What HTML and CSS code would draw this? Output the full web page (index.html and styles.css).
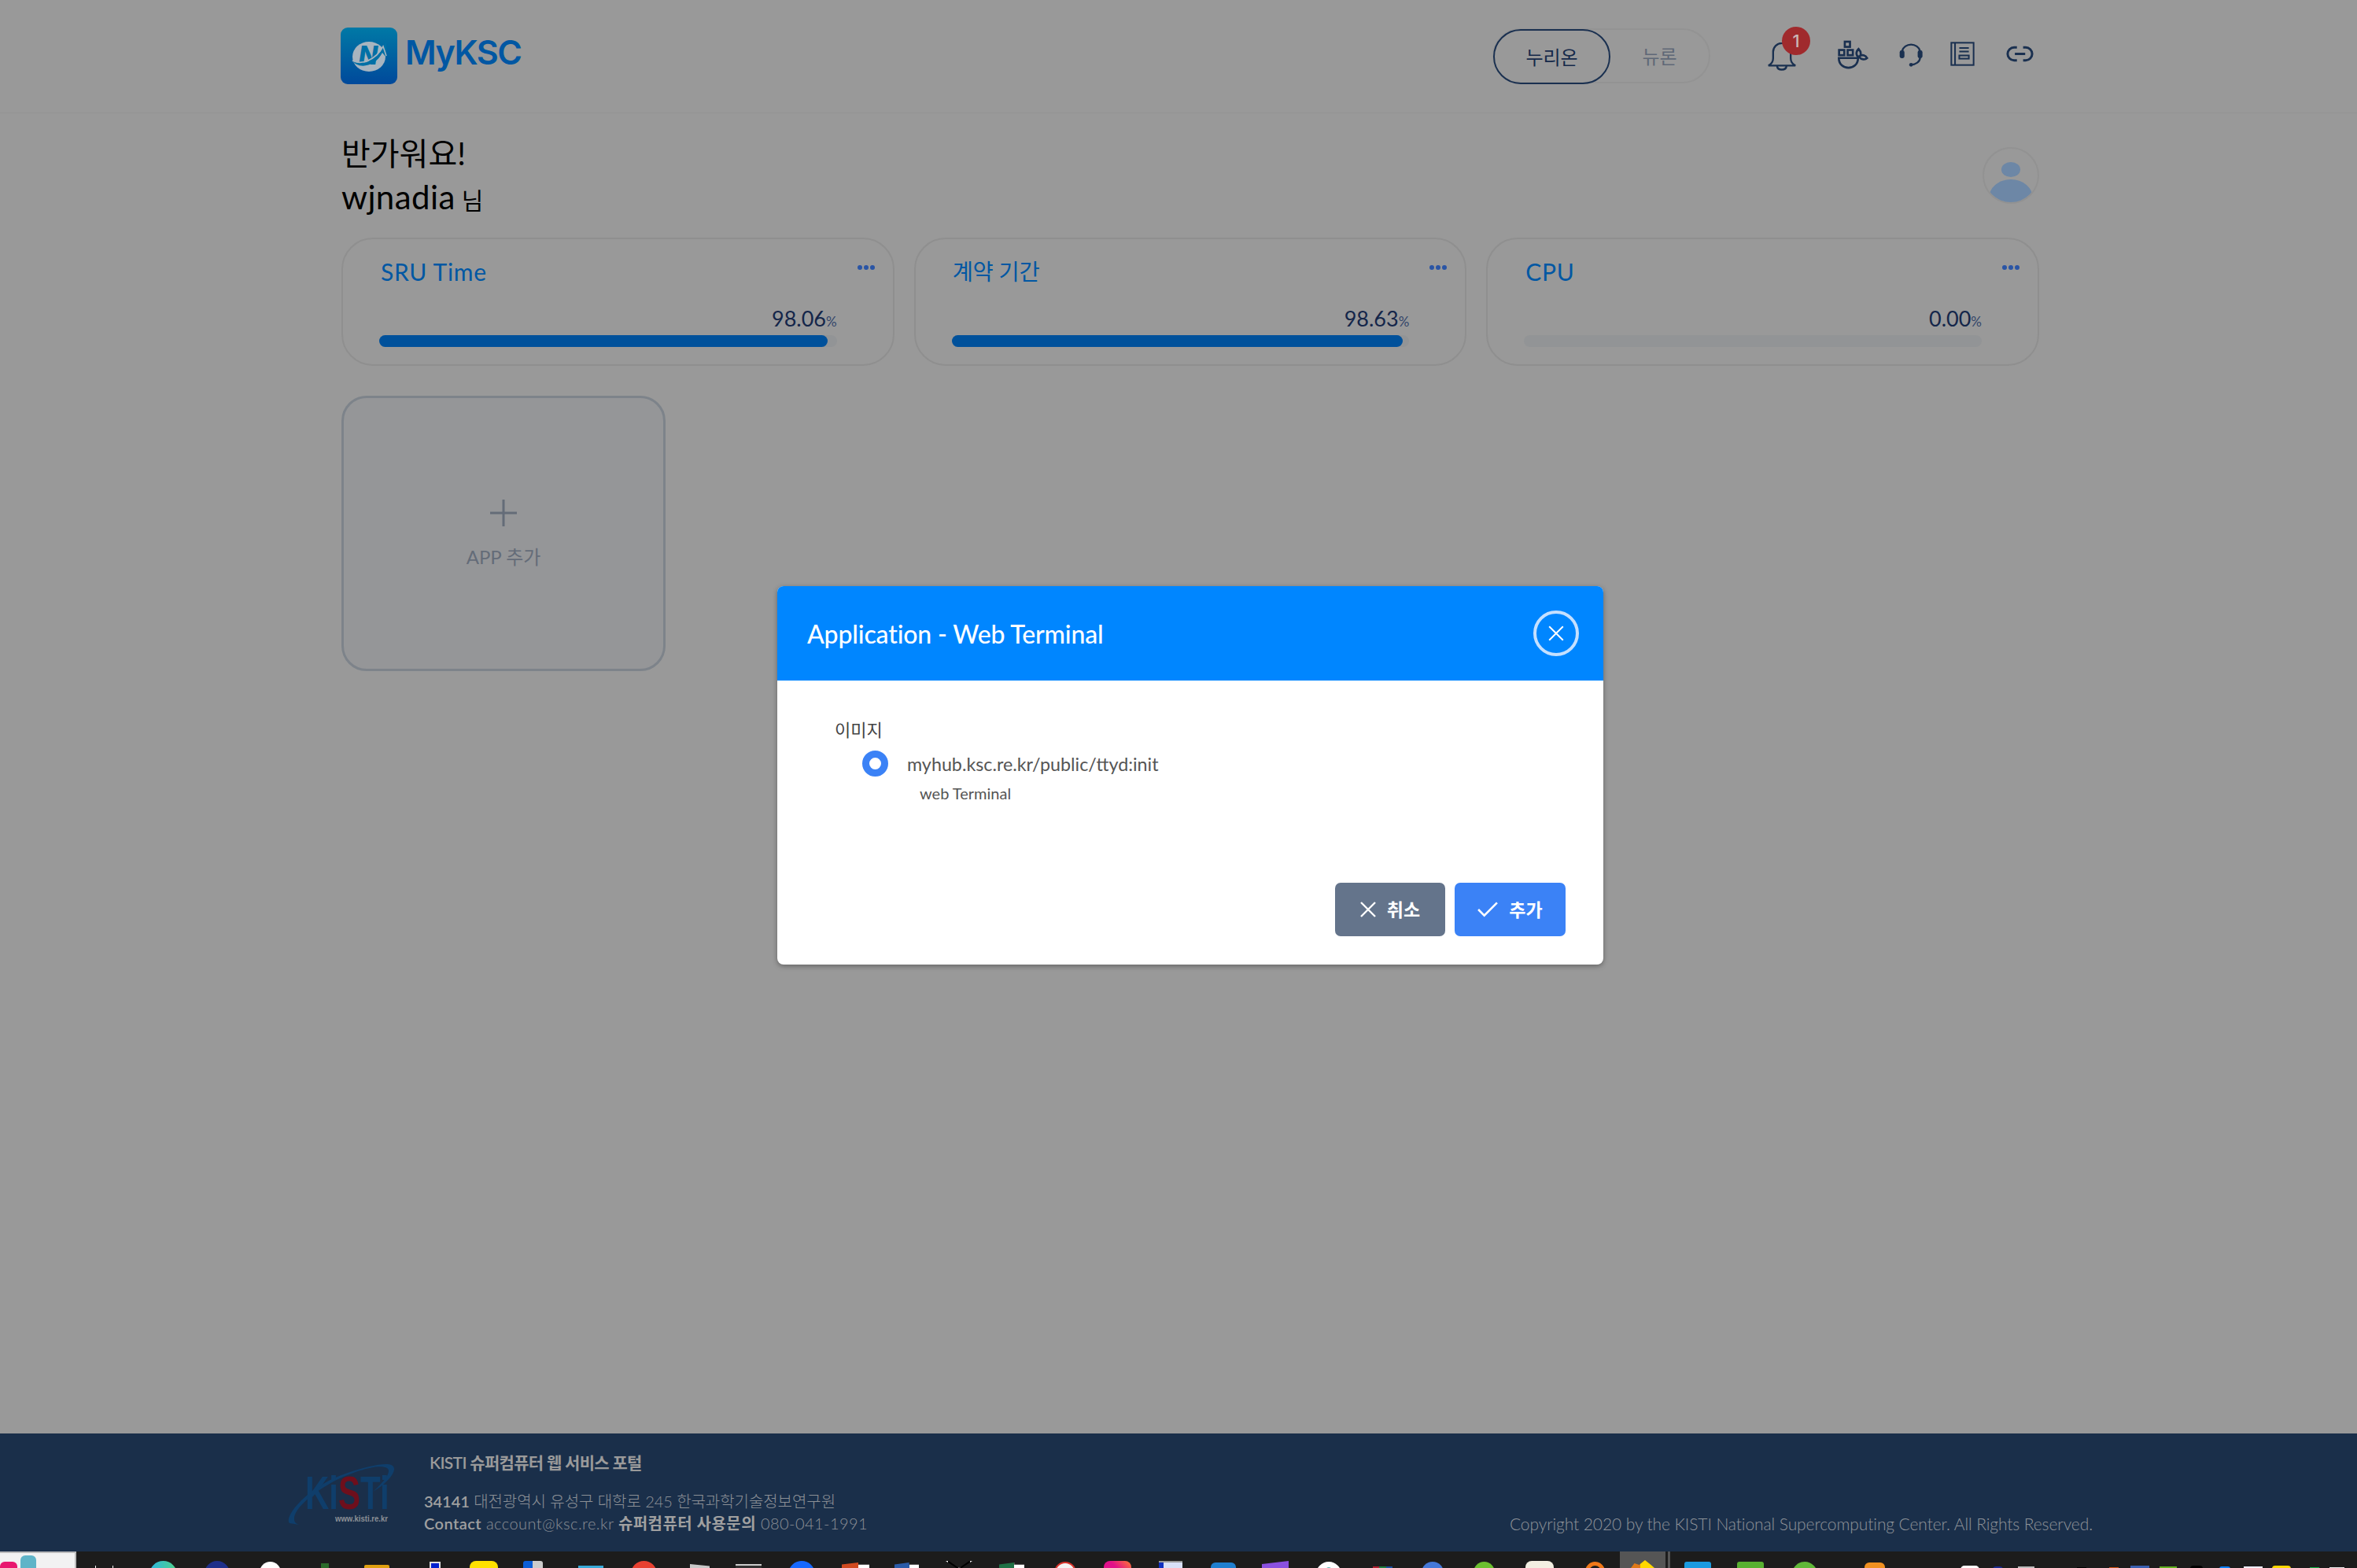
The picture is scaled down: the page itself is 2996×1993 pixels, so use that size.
FILE: index.html
```html
<!DOCTYPE html>
<html lang="ko">
<head>
<meta charset="utf-8">
<title>MyKSC</title>
<link rel="stylesheet" href="styles.css">
</head>
<body>
<div class="page">
  <header class="topbar">
    <div class="brand">
      <svg class="brand-mark" viewBox="0 0 72 72">
        <defs><linearGradient id="lg" x1="0" y1="0" x2="0" y2="1"><stop offset="0" stop-color="#0079a6"/><stop offset="1" stop-color="#00499b"/></linearGradient></defs>
        <rect width="72" height="72" rx="9" fill="url(#lg)"/>
        <ellipse cx="36" cy="37" rx="21" ry="19" fill="#a7b4bf"/>
        <text x="35" y="47" class="brand-n" text-anchor="middle">N</text>
        <path d="M14 41C24 50 44 44 53 26L58 18L58 38L53 32C44 50 22 54 14 41Z" fill="#0070a6"/>
        <path d="M15 42C26 48 44 42 54 24L58 36" fill="none" stroke="#a7b4bf" stroke-width="1.6"/>
      </svg>
      <span class="brand-name">MyKSC</span>
    </div>
    <div class="toggle">
      <button class="toggle-on">누리온</button>
      <button class="toggle-off">뉴론</button>
    </div>
    <nav class="tools">
      <span class="bell-wrap">
        <svg class="ic ic-bell" viewBox="77 97 113 108"><path d="M82 185c12-6 18-14 18-28v-24a33 33 0 0 1 67 0v24c0 14 6 22 18 28zM115 187c2 18 34 18 36 0" fill="none"/></svg>
        <span class="badge">1</span>
      </span>
      <svg class="ic ic-docker" viewBox="340 85 125 115"><rect x="372" y="94" width="20" height="20"/><rect x="350" y="126" width="20" height="20"/><rect x="383" y="126" width="20" height="20"/><path d="M349 157h74c0 50-74 50-74 0zM425 122c-14 14-8 28 2 32 8-6 10-20-2-32zM428 150c10-8 24-4 30 7-8 8-22 6-30-3z"/></svg>
      <svg class="ic ic-head" viewBox="580 95 95 95"><path d="M594 130a35 32 0 0 1 68 0M662 155c0 16-16 26-34 27"/><rect class="solid" x="585" y="128" width="18" height="29" rx="7"/><rect class="solid" x="653" y="128" width="18" height="29" rx="7"/><circle class="solid" cx="628" cy="182" r="7"/></svg>
      <svg class="ic ic-book" viewBox="778 98 92 92"><rect x="782" y="102" width="84" height="84"/><path d="M796 102v84M812 122h36M812 135h36"/><rect x="812" y="150" width="36" height="12"/></svg>
      <svg class="ic ic-link" viewBox="995 113 105 64"><path d="M1036 120h-11a25 25 0 0 0 0 50h11M1060 120h10a25 25 0 0 1 0 50h-10M1028 145h40"/></svg>
    </nav>
  </header>

  <main class="content">
    <section class="greeting">
      <div class="hello">
        <p class="hello-1">반가워요!</p>
        <p class="hello-2">wjnadia <small>님</small></p>
      </div>
      <div class="avatar">
        <span class="avatar-head"></span>
        <span class="avatar-body"></span>
      </div>
    </section>

    <section class="cards">
      <article class="card">
        <div class="card-head"><h3>SRU Time</h3><span class="dots"><i></i><i></i><i></i></span></div>
        <div class="pct">98.06<small>%</small></div>
        <div class="track"><div class="fill" style="width:98.06%"></div></div>
      </article>
      <article class="card">
        <div class="card-head"><h3 class="ko">계약 기간</h3><span class="dots"><i></i><i></i><i></i></span></div>
        <div class="pct">98.63<small>%</small></div>
        <div class="track"><div class="fill" style="width:98.63%"></div></div>
      </article>
      <article class="card">
        <div class="card-head"><h3>CPU</h3><span class="dots"><i></i><i></i><i></i></span></div>
        <div class="pct">0.00<small>%</small></div>
        <div class="track"><div class="fill" style="width:0%"></div></div>
      </article>
    </section>

    <button class="add-app">
      <svg class="add-plus" viewBox="0 0 36 36"><path d="M18 1v34M1 18h34"/></svg>
      <span>APP 추가</span>
    </button>
  </main>
</div>

<footer class="footer">
  <svg class="kisti" viewBox="0 0 140 84">
    <path d="M2 78C-6 70 26 30 76 14C110 3 136 -2 135 10C134 18 122 30 108 38C124 24 132 12 126 8C116 2 84 12 60 24C30 40 8 60 8 72C8 76 9 78 14 80Z" fill="#0f3e6b"/>
    <text transform="translate(22 60) scale(.7 1)" class="kisti-name">Ki<tspan class="kisti-s">S</tspan>Ti</text>
    <text x="60" y="76" class="kisti-url" textLength="67" lengthAdjust="spacingAndGlyphs">www.kisti.re.kr</text>
  </svg>
  <div class="foot-info">
    <p class="foot-title">KISTI 슈퍼컴퓨터 웹 서비스 포털</p>
    <p class="foot-line"><b>34141</b> 대전광역시 유성구 대학로 245 한국과학기술정보연구원</p>
    <p class="foot-line foot-contact"><b>Contact</b> account@ksc.re.kr <b>슈퍼컴퓨터 사용문의</b> 080-041-1991</p>
  </div>
  <p class="copyright">Copyright 2020 by the KISTI National Supercomputing Center. All Rights Reserved.</p>
</footer>

<div class="taskbar">
  <span class="t-start"><i class="t-pink"></i><i class="t-puzzle"></i></span>
  <i class="t t1"></i><i class="t t2"></i><i class="t t3"></i><i class="t t4"></i><i class="t t5"></i><i class="t t6"></i>
  <i class="t t7"></i><i class="t t8"></i><i class="t t9"></i><i class="t t10"></i><i class="t t11"></i><i class="t t12"></i>
  <i class="t t13"></i><i class="t t14"></i><i class="t t15"></i><i class="t t16"></i><i class="t t17"></i><i class="t t18"></i>
  <i class="t t19"></i><i class="t t20"></i><i class="t t21"></i><i class="t t22"></i><i class="t t23"></i><i class="t t24"></i>
  <i class="t t25"></i><i class="t t26"></i><i class="t t27"></i><i class="t t28"></i><i class="t t29"></i>
  <span class="t t30"><i class="t-flame"></i></span><i class="t t31"></i>
  <i class="t t32"></i><i class="t t33"></i><i class="t t34"></i><i class="t t35"></i>
  <i class="t t36"></i><i class="t t37"></i><i class="t t38"></i><i class="t t39"></i><i class="t t40"></i><i class="t t41"></i><i class="t t42"></i>
  <i class="t t43"></i><i class="t t44"></i><i class="t t45"></i><i class="t t46"></i><i class="t t47"></i><i class="t t48"></i>
</div>

<div class="modal" role="dialog">
  <div class="modal-head">
    <h2>Application - Web Terminal</h2>
    <button class="modal-close">
      <svg viewBox="0 0 20 20"><path d="M2 2l16 16M18 2L2 18"/></svg>
    </button>
  </div>
  <div class="modal-body">
    <label class="field-label">이미지</label>
    <div class="option">
      <span class="radio"></span>
      <span class="option-name">myhub.ksc.re.kr/public/ttyd:init</span>
    </div>
    <p class="option-desc">web Terminal</p>
  </div>
  <div class="modal-foot">
    <button class="btn btn-cancel"><svg viewBox="0 0 20 20"><path d="M1 1l18 18M19 1L1 19"/></svg><span>취소</span></button>
    <button class="btn btn-ok"><svg class="chk" viewBox="0 0 24 18"><path d="M1 9l7 7L23 1"/></svg><span>추가</span></button>
  </div>
</div>
</body>
</html>
```
FILE: styles.css
```css
* { box-sizing: border-box; }
html, body { height: 100%; }
body {
  margin: 0;
  width: 2996px;
  height: 1993px;
  overflow: hidden;
  display: flex;
  flex-direction: column;
  position: relative;
  background: #999;
  font-family: "Lato", "Noto Sans CJK KR", sans-serif;
  color: #14264a;
}
p, h2, h3 { margin: 0; font-weight: 400; }
button { font: inherit; border: 0; background: none; padding: 0; }

.page { flex: 1; min-height: 0; }

.topbar {
  height: 144px;
  padding: 0 411px 0 433px;
  display: flex;
  align-items: center;
  border-bottom: 1px solid #949494;
}
.brand { display: flex; align-items: center; gap: 10px; margin-top: -1px; }
.brand-mark { width: 72px; height: 72px; }
.brand-n { font: italic 800 32px "Inter", sans-serif; fill: #0070a6; }
.brand-name {
  font: 600 43px "Inter", sans-serif;
  letter-spacing: -1.5px;
  color: #0057a3;
  margin-top: -10px;
}

.toggle {
  margin: -2px 0 0 auto;
  width: 277px;
  height: 70px;
  display: flex;
  border: 2px solid #939393;
  border-radius: 35px;
}
.toggle-on {
  width: 149px;
  height: 70px;
  margin: -1px 0 0 -1px;
  border: 2px solid #1a3050;
  border-radius: 35px;
  font-size: 24px;
  color: #15294a;
}
.toggle-off { flex: 1; font-size: 24px; color: #5f6877; }

.tools { display: flex; align-items: center; margin: -6px 0 0 72px; }
.ic { display: block; fill: none; stroke: #1a3050; stroke-width: 8; }
.ic .solid { fill: #1a3050; stroke: none; }
.bell-wrap { position: relative; display: block; }
.ic-bell { width: 38px; height: 36px; stroke-width: 7; margin-top: 7px; }
.badge {
  position: absolute;
  left: 19px;
  top: -13px;
  width: 36px;
  height: 36px;
  border-radius: 50%;
  background: #a02a2d;
  color: #c9b6b6;
  font: 500 22px/36px "Inter", sans-serif;
  text-align: center;
}
.ic-docker { width: 42px; height: 38px; margin-left: 50px; }
.ic-head { width: 32px; height: 32px; margin-left: 37px; stroke-width: 7; }
.ic-book { width: 31px; height: 31px; margin-left: 34px; stroke-width: 6; }
.ic-link { width: 35px; height: 21px; margin-left: 40px; stroke-width: 9; }

.content { margin-left: 434px; width: 2158px; }

.greeting { height: 158px; display: flex; justify-content: space-between; }
.hello { padding-top: 23px; color: #000; }
.hello-1 { font-size: 40px; line-height: 56px; }
.hello-2 { font-size: 42px; line-height: 56px; letter-spacing: .4px; margin-top: -1px; }
.hello-2 small { font-size: 30px; margin-left: -3px; }
.avatar {
  margin-top: 43px;
  width: 72px;
  height: 72px;
  border-radius: 50%;
  border: 2px solid #929292;
  overflow: hidden;
  display: flex;
  flex-direction: column;
  align-items: center;
}
.avatar-head { width: 24px; height: 24px; margin-top: 17px; border-radius: 50%; background: #6d87a6; }
.avatar-body { width: 56px; height: 36px; margin-top: 3px; border-radius: 28px 28px 0 0 / 24px 24px 0 0; background: #6d87a6; }

.cards { display: grid; grid-template-columns: repeat(3, 1fr); gap: 25px; }
.card {
  height: 163px;
  padding: 0 23px 0 46px;
  border: 2px solid #8f8f8f;
  border-radius: 40px;
}
.card-head { height: 86px; display: flex; justify-content: space-between; }
.card-head h3 { font-size: 30px; letter-spacing: .7px; line-height: 44px; margin: 19px 0 0 2px; color: #0057a3; }
.card-head h3.ko { font-size: 28.5px; letter-spacing: -.3px; margin: 19px 0 0 1px; }
.dots { display: flex; gap: 2px; margin-top: 33px; height: 6px; }
.dots i { width: 6px; height: 6px; border-radius: 50%; background: #2a55a5; }
.pct {
  margin-right: 48px;
  height: 32px;
  margin-top: -1px;
  text-align: right;
  font-size: 27px;
  line-height: 32px;
}
.pct small { font-size: 17px; color: #33466a; }
.track {
  margin: 5px 48px 0 0;
  height: 15px;
  border-radius: 8px;
  background: #929496;
}
.fill { height: 100%; border-radius: 8px; background: #00519b; }

.add-app {
  display: flex;
  flex-direction: column;
  align-items: center;
  margin-top: 38px;
  width: 412px;
  height: 350px;
  padding-top: 128px;
  border: 3px solid #7d838a;
  border-radius: 32px;
  background: #959698;
  color: #646c78;
  font-size: 24px;
}
.add-plus { width: 36px; height: 36px; fill: none; stroke: #646c78; stroke-width: 3; margin-bottom: 19px; }

.footer {
  height: 150px;
  flex: none;
  padding: 0 336px 0 366px;
  display: flex;
  background: #1a2f4a;
  color: #8c9096;
}
.kisti { width: 140px; height: 84px; margin-top: 36px; }
.kisti-name { font: 700 60px "Liberation Sans", sans-serif; fill: #0f3e6b; }
.kisti-s { fill: #6e0f1c; }
.kisti-url { font: 700 10px "Liberation Sans", sans-serif; fill: #8c9096; }
.foot-info { margin-left: 33px; }
.foot-title { margin: 22px 0 0 7px; font-size: 21px; line-height: 30px; font-weight: 600; color: #9a9a9a; letter-spacing: -0.7px; }
.foot-line { font-size: 20px; line-height: 28px; font-weight: 300; letter-spacing: -.05px; }
.foot-contact { letter-spacing: .45px; }
.foot-title + .foot-line { margin-top: 20px; }
.foot-line b { font-weight: 600; color: #a0a0a0; }
.copyright { margin: 101px 0 0 auto; font-size: 21px; line-height: 28px; letter-spacing: -.09px; color: #8f9399; font-weight: 300; }

.taskbar {
  height: 21px;
  flex: none;
  display: flex;
  align-items: flex-start;
  overflow: hidden;
  background: #1c1c1c;
}
.taskbar i, .taskbar span { display: block; flex: none; }
.taskbar .t-start {
  width: 97px;
  height: 21px;
  display: flex;
  background: #f2f2f2;
  border-top: 2px solid #bbb;
  border-right: 2px solid #bbb;
}
.t-pink { width: 22px; height: 14px; margin-top: 11px; border-radius: 6px 6px 0 0; background: #e8186f; }
.t-puzzle { width: 20px; height: 24px; margin: 3px 0 0 4px; border-radius: 6px; background: #5fb4c8; }

.t1 { margin: 18px 0 0 24px; width: 23px; height: 3px; border-left: 1px solid #fff; border-right: 1px solid #fff; }
.t2 { margin: 12px 0 0 46px; width: 35px; height: 35px; border-radius: 50%; background: linear-gradient(90deg, #2bb7e0, #4fd08a); }
.t3 { margin: 12px 0 0 35px; width: 32px; height: 32px; border-radius: 50%; background: #1e2f8a; }
.t4 { margin: 13px 0 0 38px; width: 27px; height: 27px; border-radius: 50%; background: radial-gradient(circle at 50% 80%, #10a040 0 6px, #fff 7px); }
.t5 { margin: 15px 0 0 51px; width: 10px; height: 8px; background: #2a6b2a; }
.t6 { margin: 17px 0 0 45px; width: 32px; height: 8px; border-radius: 2px 2px 0 0; background: #e0a010; }
.t7 { margin: 13px 0 0 51px; width: 14px; height: 10px; background: #0020d0; border: 2px solid #ddd; border-bottom: 0; }
.t8 { margin: 12px 0 0 37px; width: 36px; height: 20px; border-radius: 8px 8px 0 0; background: radial-gradient(circle at 50% 100%, #4a2a10 0 10px, #ffe100 11px); }
.t9 { margin: 12px 0 0 32px; width: 25px; height: 12px; background: linear-gradient(90deg, #0b5ed7 50%, #ccc 50%); border-radius: 3px 3px 0 0; }
.t10 { margin: 18px 0 0 45px; width: 32px; height: 8px; background: #38a9d8; }
.t11 { margin: 12px 0 0 35px; width: 33px; height: 33px; border-radius: 50%; background: #e84030; }
.t12 { margin: 16px 0 0 42px; width: 25px; height: 8px; background: #c8c8c8; clip-path: polygon(0 0, 100% 30%, 100% 100%, 0 100%); }
.t13 { margin: 16px 0 0 33px; width: 33px; height: 8px; background: #333; border-top: 2px solid #ccc; }
.t14 { margin: 12px 0 0 34px; width: 34px; height: 34px; border-radius: 50%; background: #1668ff; }
.t15 { margin: 14px 0 0 34px; width: 35px; height: 8px; background: linear-gradient(90deg, #d04a20 60%, #fff 60%); clip-path: polygon(0 30%, 60% 0, 60% 35%, 100% 35%, 100% 100%, 0 100%); }
.t16 { margin: 14px 0 0 32px; width: 31px; height: 8px; background: linear-gradient(90deg, #2b5ba8 60%, #fff 60%); clip-path: polygon(0 30%, 60% 0, 60% 35%, 100% 35%, 100% 100%, 0 100%); }
.t17 { margin: 12px 0 0 34px; width: 34px; height: 9px; background: linear-gradient(90deg, #eee 8%, #000 8%, #000 48%, #eee 48%, #000 56%, #000 92%, #eee 92%); clip-path: polygon(0 0, 12% 0, 50% 100%, 88% 0, 100% 0, 60% 100%, 40% 100%); }
.t18 { margin: 14px 0 0 34px; width: 32px; height: 8px; background: linear-gradient(90deg, #1e7145 60%, #fff 60%); clip-path: polygon(0 30%, 60% 0, 60% 35%, 100% 35%, 100% 100%, 0 100%); }
.t19 { margin: 13px 0 0 38px; width: 28px; height: 28px; border-radius: 50%; background: #f3f3f3; border: 2px solid #d8342c; }
.t20 { margin: 12px 0 0 35px; width: 35px; height: 20px; border-radius: 8px 8px 0 0; background: linear-gradient(45deg, #e0108a 50%, #ff7a30); }
.t21 { margin: 12px 0 0 35px; width: 30px; height: 12px; background: linear-gradient(90deg, #1030c0 20%, #d8e0f8 20%); border-top: 2px solid #999; }
.t22 { margin: 14px 0 0 36px; width: 32px; height: 10px; border-radius: 6px 6px 0 0; background: #1f7fd0; }
.t23 { margin: 12px 0 0 33px; width: 34px; height: 9px; background: #8a50e0; clip-path: polygon(0 100%, 0 45%, 100% 0, 100% 100%); }
.t24 { margin: 13px 0 0 35px; width: 32px; height: 32px; border-radius: 50%; background: radial-gradient(circle at 50% 40%, #20a0a0 0 5px, #fff 6px); }
.t25 { margin: 19px 0 0 40px; width: 25px; height: 4px; background: linear-gradient(90deg, #b02030 33%, #208040 33%, #208040 66%, #1a4fa0 66%); }
.t26 { margin: 13px 0 0 37px; width: 28px; height: 28px; border-radius: 50%; background: #4478d8; }
.t27 { margin: 13px 0 0 38px; width: 27px; height: 27px; border-radius: 50%; background: #6cc030; }
.t28 { margin: 12px 0 0 39px; width: 36px; height: 20px; border-radius: 8px 8px 0 0; background: #f3efe2; }
.t29 { margin: 13px 0 0 40px; width: 25px; height: 25px; border-radius: 50%; border: 5px solid #f07818; }
.taskbar .t30 { margin: 0 0 0 19px; width: 58px; height: 21px; background: #555; display: flex; justify-content: center; }
.t-flame { width: 30px; height: 10px; margin-top: 11px; background: linear-gradient(90deg, #e07818 40%, #ffd800 40%); clip-path: polygon(0 100%, 15% 40%, 35% 60%, 60% 0, 85% 60%, 100% 100%); }
.t31 { margin: 0 0 0 3px; width: 3px; height: 21px; background: #555; }
.t32 { margin: 13px 0 0 18px; width: 34px; height: 10px; background: #1a9ae0; border-radius: 3px 3px 0 0; }
.t33 { margin: 13px 0 0 33px; width: 34px; height: 10px; background: #58b030; border-radius: 3px 3px 0 0; }
.t34 { margin: 13px 0 0 36px; width: 32px; height: 32px; border-radius: 50%; background: #60b838; }
.t35 { margin: 14px 0 0 60px; width: 26px; height: 8px; border-radius: 6px 6px 0 0; background: #f09020; }
.t36 { margin: 18px 0 0 96px; width: 24px; height: 5px; border-radius: 6px 6px 0 0; background: #fff; }
.t37 { margin: 19px 0 0 17px; width: 13px; height: 4px; border-radius: 6px 6px 0 0; background: #1a2a90; }
.t38 { margin: 19px 0 0 19px; width: 21px; height: 3px; background: #bbb; }
.t39 { margin: 20px 0 0 54px; width: 12px; height: 2px; background: #000; }
.t40 { margin: 20px 0 0 29px; width: 12px; height: 2px; background: #d05010; }
.t41 { margin: 18px 0 0 15px; width: 24px; height: 4px; background: #3a5fb0; }
.t42 { margin: 19px 0 0 13px; width: 22px; height: 3px; background: #60b020; }
.t43 { margin: 18px 0 0 17px; width: 16px; height: 4px; border-radius: 6px 6px 0 0; background: #000; }
.t44 { margin: 19px 0 0 21px; width: 14px; height: 3px; border-radius: 6px 6px 0 0; background: #0a80ff; }
.t45 { margin: 19px 0 0 17px; width: 24px; height: 3px; background: #eef; }
.t46 { margin: 18px 0 0 12px; width: 24px; height: 4px; border-radius: 4px 4px 0 0; background: #ffd800; }
.t47 { margin: 20px 0 0 24px; width: 12px; height: 2px; background: #10b040; }
.t48 { margin: 20px 0 0 13px; width: 19px; height: 2px; background: #eee; }

.modal {
  position: absolute;
  left: 988px;
  top: 745px;
  width: 1050px;
  height: 481px;
  display: flex;
  flex-direction: column;
  border-radius: 8px;
  overflow: hidden;
  background: #fff;
  box-shadow: 0 2px 6px rgba(0, 0, 0, .35);
}
.modal-head {
  height: 120px;
  flex: none;
  display: flex;
  align-items: center;
  justify-content: space-between;
  padding: 0 31px 0 38px;
  background: #0086ff;
  color: #fff;
}
.modal-head h2 { font-size: 32px; font-weight: 500; letter-spacing: -.15px; }
.modal-close {
  width: 58px;
  height: 58px;
  display: flex;
  align-items: center;
  justify-content: center;
  border: 4px solid #c5e0ff;
  border-radius: 50%;
}
.modal-close svg { width: 22px; height: 22px; fill: none; stroke: #fff; stroke-width: 1.8; }
.modal-body { flex: 1; padding: 48px 0 0 73px; color: #444; }
.field-label { display: block; font-size: 22px; line-height: 30px; }
.option { display: flex; align-items: center; gap: 24px; margin: 11px 0 0 35px; }
.radio { width: 33px; height: 33px; border-radius: 50%; border: 9px solid #3b82f6; background: #fff; }
.option-name { font-size: 23.3px; color: #555; }
.option-desc { margin: 7px 0 0 108px; font-size: 20px; line-height: 28px; color: #555; }
.modal-foot { display: flex; justify-content: flex-end; gap: 12px; padding: 0 48px 36px 0; }
.btn {
  width: 140px;
  height: 68px;
  display: flex;
  align-items: center;
  justify-content: center;
  gap: 14px;
  border-radius: 7px;
  color: #fff;
  font-size: 23px;
  font-weight: 600;
}
.btn span { margin-top: -3px; }
.btn svg { width: 20px; height: 20px; fill: none; stroke: #fff; stroke-width: 2.4; }
.btn svg.chk { width: 26px; height: 20px; }
.btn-cancel { background: #64748b; }
.btn-ok { width: 141px; background: #3b82f6; }
```
